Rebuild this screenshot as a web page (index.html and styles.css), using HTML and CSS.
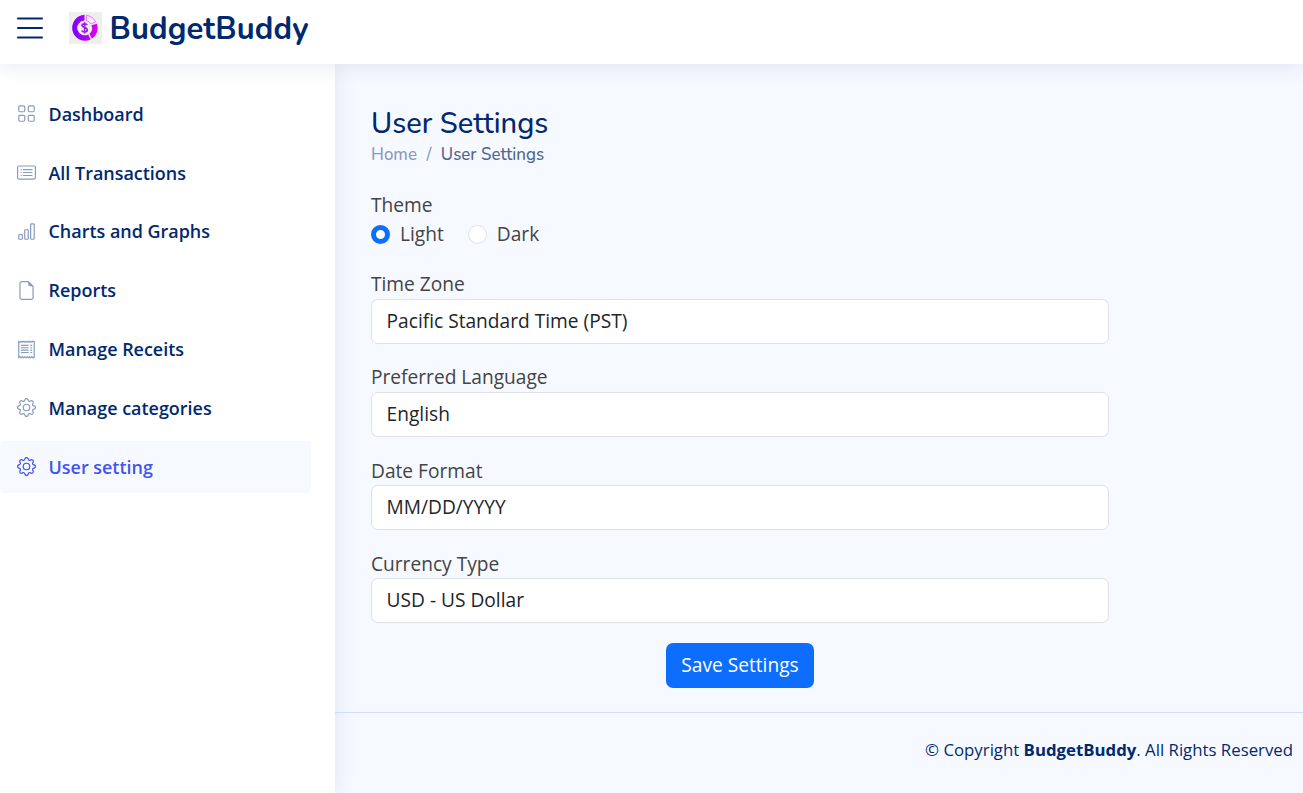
FILE: index.html
```html
<!DOCTYPE html>
<html lang="en">
<head>
<meta charset="utf-8">
<title>User Settings - BudgetBuddy</title>
<link rel="stylesheet" href="styles.css">
</head>
<body>
<svg width="0" height="0" class="defs">
  <symbol id="gear" viewBox="0 0 16 16"><path d="M8 4.754a3.246 3.246 0 1 0 0 6.492 3.246 3.246 0 0 0 0-6.492zM5.754 8a2.246 2.246 0 1 1 4.492 0 2.246 2.246 0 0 1-4.492 0z"/><path d="M9.796 1.343c-.527-1.79-3.065-1.79-3.592 0l-.094.319a.873.873 0 0 1-1.255.52l-.292-.16c-1.64-.892-3.433.902-2.54 2.541l.159.292a.873.873 0 0 1-.52 1.255l-.319.094c-1.79.527-1.79 3.065 0 3.592l.319.094a.873.873 0 0 1 .52 1.255l-.16.292c-.892 1.64.901 3.434 2.541 2.54l.292-.159a.873.873 0 0 1 1.255.52l.094.319c.527 1.79 3.065 1.79 3.592 0l.094-.319a.873.873 0 0 1 1.255-.52l.292.16c1.64.893 3.434-.902 2.54-2.541l-.159-.292a.873.873 0 0 1 .52-1.255l.319-.094c1.79-.527 1.79-3.065 0-3.592l-.319-.094a.873.873 0 0 1-.52-1.255l.16-.292c.893-1.64-.902-3.433-2.541-2.54l-.292.159a.873.873 0 0 1-1.255-.52l-.094-.319zm-2.633.283c.246-.835 1.428-.835 1.674 0l.094.319a1.873 1.873 0 0 0 2.693 1.115l.291-.16c.764-.415 1.6.42 1.184 1.185l-.159.292a1.873 1.873 0 0 0 1.116 2.692l.318.094c.835.246.835 1.428 0 1.674l-.319.094a1.873 1.873 0 0 0-1.115 2.693l.16.291c.415.764-.42 1.6-1.185 1.184l-.291-.159a1.873 1.873 0 0 0-2.693 1.116l-.094.318c-.246.835-1.428.835-1.674 0l-.094-.319a1.873 1.873 0 0 0-2.692-1.115l-.292.16c-.764.415-1.6-.42-1.184-1.185l.159-.291A1.873 1.873 0 0 0 1.945 8.93l-.319-.094c-.835-.246-.835-1.428 0-1.674l.319-.094A1.873 1.873 0 0 0 3.06 4.377l-.16-.292c-.415-.764.42-1.6 1.185-1.184l.292.159a1.873 1.873 0 0 0 2.692-1.115l.094-.319z"/></symbol>
</svg>
<header class="header">
  <svg class="toggle" viewBox="0 0 26 22"><path d="M1 1.5h24M1 11h24M1 20.5h24"/></svg>
  <svg class="logo-mark" viewBox="0 0 33 32">
    <defs><linearGradient id="ring"><stop offset="0" stop-color="#7a00ff"/><stop offset="1" stop-color="#c800f0"/></linearGradient></defs>
    <rect width="33" height="32" fill="#eee"/>
    <path d="M15.500 2.800A13 13 0 1 0 21.600 27.600L19.200 22.400A7.400 7.400 0 1 1 15.500 8.500Z" fill="url(#ring)"/>
    <path d="M22.900 26.800A13 13 0 0 0 28 11.800L22.400 13.200A7.400 7.400 0 0 1 20.400 21.800Z" fill="#d500f0"/>
    <path d="M17.400 3.300A12.800 12.800 0 0 1 26.600 9.600L22.100 12A8 8 0 0 0 17.400 8.600Z" fill="#f7ecfa" stroke="#dc70ee" stroke-width=".9"/>
    <path d="M18.200 13C17.600 11.400 13 11.200 13 13.600C13 16.100 18.300 15 18.300 17.900C18.300 20.500 13.400 20.400 12.800 18.400M15.600 10.200v11.400" fill="none" stroke="#9d20e8" stroke-width="1.7"/>
  </svg>
  <span class="brand">BudgetBuddy</span>
</header>
<div class="layout">
  <aside class="sidebar">
    <nav class="nav">
      <a class="nav-link"><svg class="icon line" viewBox="0 0 16 16"><rect x="1.5" y="1.5" width="5" height="5" rx="1"/><rect x="9.5" y="1.5" width="5" height="5" rx="1"/><rect x="1.5" y="9.5" width="5" height="5" rx="1"/><rect x="9.5" y="9.5" width="5" height="5" rx="1"/></svg><span>Dashboard</span></a>
      <a class="nav-link"><svg class="icon line" viewBox="0 0 16 16"><rect x=".5" y="2.5" width="15" height="11" rx="1"/><path d="M5 5.5h8M5 8h8M5 10.5h8M3 5.5h1M3 8h1M3 10.5h1"/></svg><span>All Transactions</span></a>
      <a class="nav-link"><svg class="icon line" viewBox="0 0 16 16"><rect x="1.5" y="10.5" width="3" height="4" rx=".6"/><rect x="6.5" y="6.5" width="3" height="8" rx=".6"/><rect x="11.5" y="1.5" width="3" height="13" rx=".6"/></svg><span>Charts and Graphs</span></a>
      <a class="nav-link"><svg class="icon line low" viewBox="0 0 16 16"><path d="M9.5.5H4A1.5 1.5 0 0 0 2.5 2v12A1.5 1.5 0 0 0 4 15.5h8a1.5 1.5 0 0 0 1.5-1.5V4.5Z"/><path class="fill" d="M9.5.5V3A1.5 1.5 0 0 0 11 4.5h2.500Z"/></svg><span>Reports</span></a>
      <a class="nav-link"><svg class="icon line low" viewBox="0 0 16 16"><path d="M1.500 1.200l1 .7 1-.9 1 .9 1-.9 1 .9 1-.9 1 .9 1-.9 1 .9 1-.9 1 .9 1-.9 1 .2v13.600l-1 .2-1-.9-1 .9-1-.9-1 .9-1-.9-1 .9-1-.9-1 .9-1-.9-1 .9-1-.9-1 .7Z"/><path d="M3.200 4.500h6.600M3.200 6.500h6.600M3.200 8.500h6.600M3.200 10.500h6.600M11.200 4.500h1.600M11.200 6.500h1.600M11.200 8.500h1.600M11.200 10.500h1.600"/></svg><span>Manage Receits</span></a>
      <a class="nav-link"><svg class="icon"><use href="#gear"/></svg><span>Manage categories</span></a>
      <a class="nav-link active"><svg class="icon"><use href="#gear"/></svg><span>User setting</span></a>
    </nav>
  </aside>
  <div class="content">
    <main class="main">
      <h1 class="title">User Settings</h1>
      <div class="crumbs"><span class="home">Home</span><span class="slash">/</span><span class="here">User Settings</span></div>
      <form class="form">
        <div class="group theme">
          <span class="label">Theme</span>
          <div class="radios"><label class="radio"><i class="dot checked"></i>Light</label><label class="radio"><i class="dot"></i>Dark</label></div>
        </div>
        <div class="group"><span class="label">Time Zone</span><div class="control">Pacific Standard Time (PST)</div></div>
        <div class="group"><span class="label">Preferred Language</span><div class="control">English</div></div>
        <div class="group"><span class="label">Date Format</span><div class="control">MM/DD/YYYY</div></div>
        <div class="group"><span class="label">Currency Type</span><div class="control">USD - US Dollar</div></div>
        <button type="button" class="save">Save Settings</button>
      </form>
    </main>
    <footer class="footer">© Copyright <strong>BudgetBuddy</strong>. All Rights Reserved</footer>
  </div>
</div>
</body>
</html>
```
FILE: styles.css
```css
* { box-sizing: border-box; }
body { margin: 0; height: 793px; overflow: hidden; display: flex; flex-direction: column; background: #f6f9ff; color: #444; font: 19.15px/28px "Open Sans", sans-serif; }
.defs { position: absolute; }
.header { position: relative; z-index: 2; flex: none; height: 64px; padding: 0 0 8px 17px; display: flex; align-items: center; background: #fff; box-shadow: 0 2px 20px rgba(1, 41, 112, .1); }
.toggle { width: 26px; height: 22px; fill: none; stroke: #012970; stroke-width: 2; stroke-linecap: round; }
.logo-mark { width: 33px; height: 32px; margin-left: 26px; }
.brand { margin-left: 7.5px; padding-top: 1px; color: #012970; font: 700 31px/36px Nunito, Lato, sans-serif; letter-spacing: .1px; }
.layout { flex: 1; display: flex; min-height: 0; }
.sidebar { flex: none; width: 335px; padding: 24px 24px 0 0; background: #fff; box-shadow: 0 0 20px rgba(1, 41, 112, .1); }
.nav { display: flex; flex-direction: column; gap: 6.8px; }
.nav-link { height: 52px; padding-left: 17px; display: flex; align-items: center; border-radius: 4px; color: #012970; font-size: 17.95px; font-weight: 600; }
.nav-link.active { background: #f6f9ff; color: #4154f1; }
.icon { width: 19px; height: 19px; margin: 0 12.5px 1px 0; fill: #899bbd; color: #899bbd; }
.icon.low { margin-bottom: 0; }
.nav-link:nth-child(3) span { margin-bottom: 1px; }
.active .icon { fill: #4154f1; }
.line { fill: none; stroke: currentColor; stroke-width: 1; }
.fill { fill: currentColor; stroke: none; }
.content { flex: 1; display: flex; flex-direction: column; }
.main { height: 648px; padding: 43px 194px 0 36px; }
.title { margin: 0; color: #012970; font: 500 29px/34px Nunito, Lato, sans-serif; }
.crumbs { display: flex; gap: 9.5px; font: 500 16.9px/24px Nunito, Lato, sans-serif; margin-top: 2px; color: #899bbd; }
.here { color: #51678f; }
.form { display: flex; flex-direction: column; padding-top: 24px; }
.group { display: flex; flex-direction: column; margin-bottom: 19.6px; }
.theme { margin-bottom: 21.8px; }
.label { line-height: 28.4px; }
.radios { display: flex; gap: 24px; padding-top: 1px; }
.radio { display: flex; align-items: center; gap: 10px; }
.dot { width: 19px; height: 19px; border: 1px solid #dee2e6; border-radius: 50%; background: #fff; }
.dot.checked { border: 5px solid #0d6efd; }
.control { height: 45.2px; padding: 0 14.6px; border: 1px solid #dee2e6; border-radius: 7px; background: #fff; color: #212529; line-height: 43px; }
.save { align-self: center; width: 148px; height: 45px; padding: 0; border: 0; border-radius: 7px; background: #0d6efd; color: #fff; font: inherit; }
.footer { flex: 1; padding: 24px 10px 0 0; border-top: 1px solid #cddfff; text-align: right; color: #012970; font-size: 16.8px; line-height: 26px; }
```
